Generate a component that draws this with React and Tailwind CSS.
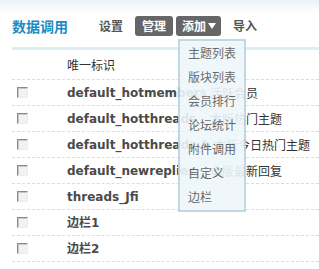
import React from 'react'

const rows = [
  { name: 'default_hotmembers', desc: '活跃会员' },
  { name: 'default_hotthreads', desc: '本版热门主题' },
  { name: 'default_hotthreads_today', desc: '本版今日热门主题', pad: true },
  { name: 'default_newreplies', desc: '本版最新回复' },
  { name: 'threads_Jfi', desc: '' },
  { name: '边栏1', desc: '' },
  { name: '边栏2', desc: '' },
]

const menu = ['主题列表', '版块列表', '会员排行', '论坛统计', '附件调用', '自定义', '边栏']

const cjk = { fontFamily: '"Noto Sans CJK SC", sans-serif' }

function Check() {
  return (
    <span className="block w-[11px] h-[11px] border border-t-[#8a8a8a] border-l-[#8a8a8a] border-r-[#ececec] border-b-[#ececec] bg-[#f2f2f2] shadow-[inset_1px_1px_0_#c8c8c8]" />
  )
}

export default function App() {
  const font = { fontFamily: '"DejaVu Sans", "Noto Sans CJK SC", sans-serif' }
  return (
    <div className="relative w-[319px] h-[269px] overflow-hidden bg-white text-[12px]" style={font}>
      {/* header */}
      <div className="flex items-center h-[47px] pl-[12px] pt-[5px] bg-[linear-gradient(#edf3f8,#ffffff_14px)]">
        <h2 className="text-[14px] font-bold text-[#1b8cc0] w-[87px]" style={cjk}>数据调用</h2>
        <span className="font-bold text-[#555] w-[36px]" style={cjk}>设置</span>
        <span className="flex items-center h-[20px] px-[7px] rounded-[3px] bg-[#666] text-white font-bold mr-[3px]" style={cjk}>管理</span>
        <span className="flex items-center h-[20px] pl-[6px] pr-[5px] rounded-[3px] bg-[#666] text-white font-bold mr-[12px]" style={cjk}>
          添加
          <span className="ml-[2px] w-0 h-0 border-l-[4px] border-r-[4px] border-t-[6px] border-l-transparent border-r-transparent border-t-white" />
        </span>
        <span className="font-bold text-[#555]" style={cjk}>导入</span>
      </div>
      <div className="ml-[12px] h-[3px] bg-[#deecf4]" />

      {/* table */}
      <div className="ml-[12px]">
        <div className="flex items-center h-[30px] border-b border-dashed border-[#dcdcdc] pl-[55px] text-[#333]" style={cjk}>
          唯一标识
        </div>
        {rows.map((r) => (
          <div key={r.name} className="flex items-center h-[26px] border-b border-dashed border-[#dcdcdc]">
            <span className="w-[55px] pl-[5px]"><Check /></span>
            <span className="w-[143px] font-bold text-[#4a4a4a] whitespace-nowrap overflow-hidden">{r.name}</span>
            <span className={`text-[#333] whitespace-nowrap ${r.pad ? 'pl-[4px]' : ''}`} style={cjk}>{r.desc}</span>
          </div>
        ))}
      </div>

      {/* dropdown menu */}
      <ul className="absolute left-[178px] top-[39px] w-[68px] pb-[1px] border-2 border-[#b9d4e0] bg-[#eef7fb] opacity-90" style={cjk}>
        {menu.map((m) => (
          <li key={m} className="flex items-center h-[24px] pl-[8px] text-[#5a5a5a]">{m}</li>
        ))}
      </ul>
    </div>
  )
}
